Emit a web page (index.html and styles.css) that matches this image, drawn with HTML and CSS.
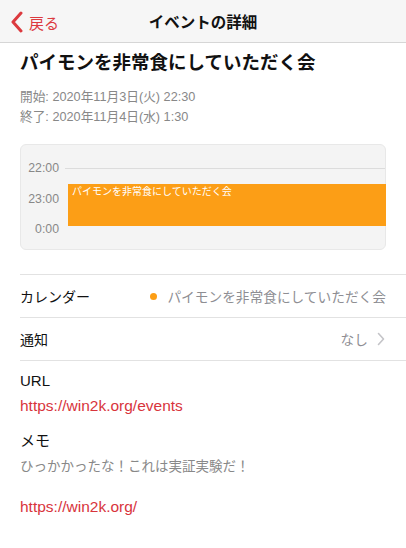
FILE: index.html
```html
<!DOCTYPE html>
<html lang="ja">
  <head>
    <meta charset="UTF-8" />
    <meta name="viewport" content="width=device-width, initial-scale=1.0" />
    <title>イベントの詳細</title>
    <link rel="stylesheet" href="styles.css">
  </head>
  <body>
    <header class="navbar">
      <a class="back" href="#">
        <svg class="back-icon" width="12" height="22" viewBox="0 0 12 22">
          <path d="M10 2 L2 11 L10 20" fill="none" stroke="#dc3a3f" stroke-width="3" stroke-linecap="round" stroke-linejoin="round" />
        </svg>
        <span>戻る</span>
      </a>
      <div class="nav-title">イベントの詳細</div>
    </header>

    <main class="content">
      <h1 class="event-title">パイモンを非常食にしていただく会</h1>
      <div class="dates">
        <div>開始: 2020年11月3日(火) 22:30</div>
        <div>終了: 2020年11月4日(水) 1:30</div>
      </div>

      <div class="day-card">
        <div class="hour first"><span class="hour-label">22:00</span><span class="hour-line"></span></div>
        <div class="hour"><span class="hour-label">23:00</span><span class="hour-line"></span></div>
        <div class="hour"><span class="hour-label">0:00</span><span class="hour-line"></span></div>
        <div class="event-block">パイモンを非常食にしていただく会</div>
      </div>

      <ul class="rows">
        <li class="row">
          <span class="row-label">カレンダー</span>
          <span class="row-value"><span class="dot"></span>パイモンを非常食にしていただく会</span>
        </li>
        <li class="row">
          <span class="row-label">通知</span>
          <span class="row-value">なし
            <svg class="chevron" width="8" height="14" viewBox="0 0 8 14">
              <path d="M1.5 1.5 L6.5 7 L1.5 12.5" fill="none" stroke="#c4c4c8" stroke-width="1.6" stroke-linecap="round" stroke-linejoin="round" />
            </svg>
          </span>
        </li>
      </ul>

      <div class="field">
        <div class="field-label">URL</div>
        <a class="link" href="#">https://win2k.org/events</a>
      </div>
      <div class="field memo-field">
        <div class="field-label">メモ</div>
        <div class="memo">ひっかかったな！これは実証実験だ！</div>
        <a class="link memo-link" href="#">https://win2k.org/</a>
      </div>
    </main>
  </body>
</html>
```

FILE: styles.css
```css
body {
  margin: 0;
  font-family: "Liberation Sans", "Noto Sans CJK JP", sans-serif;
  background: #fff;
  color: #111;
}
a {
  text-decoration: none;
}
.navbar {
  height: 42px;
  background: #f6f6f6;
  border-bottom: 1px solid #d6d6d6;
  display: flex;
  align-items: center;
  justify-content: center;
  position: relative;
}
.back {
  position: absolute;
  left: 11px;
  top: 11px;
  display: flex;
  align-items: center;
  gap: 6px;
  color: #dc3a3f;
  font-size: 15px;
}
.nav-title {
  font-size: 15.5px;
  font-weight: bold;
  color: #111;
}
.content {
  padding-left: 20px;
}
.event-title {
  margin: 0;
  padding-top: 6px;
  font-size: 18.5px;
  line-height: 28px;
  font-weight: bold;
}
.dates {
  margin-top: 10px;
  font-size: 12.7px;
  line-height: 20px;
  color: #888;
}
.day-card {
  position: relative;
  margin: 17px 20px 0 0;
  height: 106px;
  box-sizing: border-box;
  padding-top: 8px;
  background: #f4f4f4;
  border: 1px solid #e8e8e8;
  border-radius: 6px;
}
.hour {
  height: 30.5px;
  display: flex;
  align-items: center;
}
.hour-label {
  width: 38px;
  text-align: right;
  font-size: 12.3px;
  color: #888;
}
.hour-line {
  flex: 1;
  margin-left: 6px;
}
.hour.first .hour-line {
  border-top: 1px solid #dcdcdc;
}
.event-block {
  position: absolute;
  left: 47px;
  right: -1px;
  top: 39px;
  height: 42px;
  background: #fc9e16;
  color: #fff;
  font-size: 10px;
  line-height: 14px;
  padding: 1px 4px;
  box-sizing: border-box;
}
.rows {
  list-style: none;
  margin: 24px 0 0;
  padding: 0;
  border-top: 1px solid #e2e2e2;
}
.row {
  height: 42px;
  display: flex;
  align-items: center;
  justify-content: space-between;
  padding-right: 20px;
  border-bottom: 1px solid #e2e2e2;
  font-size: 14px;
}
.row-value {
  display: flex;
  align-items: center;
  font-size: 13.7px;
  color: #8e8e93;
}
.dot {
  width: 7px;
  height: 7px;
  border-radius: 50%;
  background: #fc9e16;
  margin-right: 10px;
}
.chevron {
  margin-left: 9px;
  margin-right: 1px;
}
.field {
  margin-top: 11px;
}
.memo-field {
  margin-top: 17px;
}
.field-label {
  font-size: 15px;
  line-height: 18px;
}
.link {
  display: block;
  margin-top: 7px;
  font-size: 15.5px;
  line-height: 18px;
  color: #d8343c;
}
.memo {
  margin-top: 8px;
  font-size: 13.5px;
  line-height: 18px;
  color: #888;
}
.memo-link {
  margin-top: 22px;
}
```
